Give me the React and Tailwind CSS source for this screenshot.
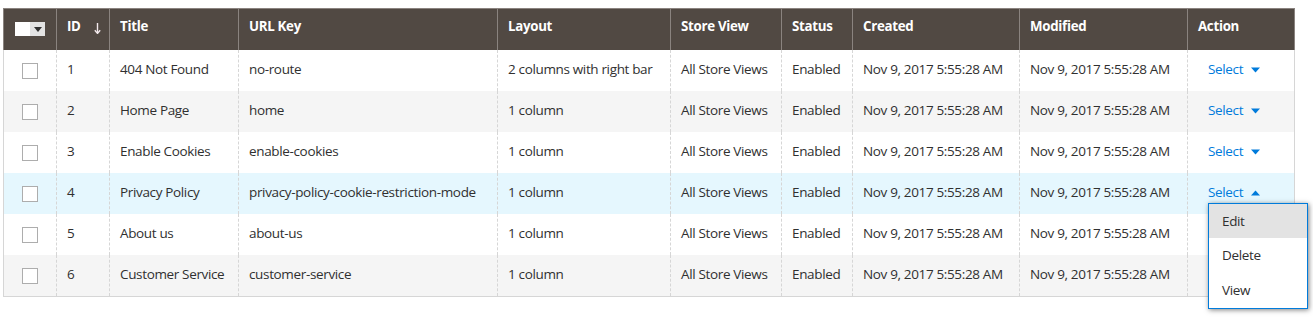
import { useState } from "react";

const rows = [
  { id: 1, title: "404 Not Found", url: "no-route", layout: "2 columns with right bar" },
  { id: 2, title: "Home Page", url: "home", layout: "1 column" },
  { id: 3, title: "Enable Cookies", url: "enable-cookies", layout: "1 column" },
  { id: 4, title: "Privacy Policy", url: "privacy-policy-cookie-restriction-mode", layout: "1 column" },
  { id: 5, title: "About us", url: "about-us", layout: "1 column" },
  { id: 6, title: "Customer Service", url: "customer-service", layout: "1 column" },
];

const cols = "grid grid-cols-[52px_53px_129px_259px_173px_111px_71px_167px_168px_107px]";

function Caret({ up }) {
  return (
    <svg width="9" height="6" viewBox="0 0 9 6" className="ml-[8px] fill-[#007bdb]">
      {up ? <path d="M0 5.5 L4.5 0.5 L9 5.5 Z" /> : <path d="M0 0.5 L9 0.5 L4.5 5.5 Z" />}
    </svg>
  );
}

export default function App() {
  const [open, setOpen] = useState(4);
  const head = ["ID", "Title", "URL Key", "Layout", "Store View", "Status", "Created", "Modified", "Action"];

  return (
    <div className="min-h-[322px] bg-white pt-[8px] pl-[3px] font-['Open_Sans',sans-serif] text-[13.5px] tracking-[-0.35px] text-[#303030]">
      <div className="w-[1292px]">
        <div className={`${cols} h-[42px] bg-[#514943] border-x border-t border-[#8a837f] text-white font-bold text-[13.3px] tracking-[-0.3px]`}>
          <div className="flex items-center justify-center pb-[1px]">
            <div className="flex h-[14px]">
              <span className="w-[15px] bg-white" />
              <span className="w-[15px] bg-[#e3e3e3] flex items-center justify-center">
                <svg width="8" height="5" viewBox="0 0 8 5"><path d="M0 0 L8 0 L4 5 Z" fill="#303030" /></svg>
              </span>
            </div>
          </div>
          {head.map((h, i) => (
            <div key={h} className="flex items-center pl-[10px] pb-[5px] border-l border-[#8a837f]">
              {h}
              {i === 0 && (
                <svg width="7" height="11" viewBox="0 0 7 11" className="ml-[13px] mt-[2px]">
                  <path d="M3.5 0 V10" stroke="#f3e9ec" strokeWidth="1.4" />
                  <path d="M0.8 7.2 L3.5 10.4 L6.2 7.2" stroke="#f3e9ec" strokeWidth="1.4" fill="none" />
                </svg>
              )}
            </div>
          ))}
        </div>
        <div className="border-x border-b border-[#d6d6d6]">
          {rows.map((r, idx) => (
            <div
              key={r.id}
              className={`${cols} h-[41px] ${r.id === 4 ? "bg-[#e5f7fe]" : idx % 2 ? "bg-[#f5f5f5]" : "bg-white"}`}
            >
              <div className="flex items-center justify-center">
                <span className="w-[16px] h-[16px] border border-[#adadad] bg-white" />
              </div>
              {[r.id, r.title, r.url, r.layout, "All Store Views", "Enabled", "Nov 9, 2017 5:55:28 AM", "Nov 9, 2017 5:55:28 AM"].map((v, i) => (
                <div key={i} className="flex items-center pl-[10px] pb-[2px] border-l border-dashed border-[#d6d6d6] whitespace-nowrap">
                  {v}
                </div>
              ))}
              <div className="relative flex items-center pl-[20px] pb-[2px] border-l border-dashed border-[#d6d6d6]">
                <button
                  onClick={() => setOpen(open === r.id ? 0 : r.id)}
                  className="flex items-center text-[#007bdb]"
                >
                  Select
                  <Caret up={open === r.id} />
                </button>
                {open === r.id && (
                  <div className="absolute z-10 left-[20px] top-[30px] w-[100px] bg-white border border-[#007bdb] shadow-[1px_1px_5px_rgba(0,0,0,0.5)]">
                    <div className="h-[34px] flex items-center pl-[13px] bg-[#e3e3e3]">Edit</div>
                    <div className="h-[35px] flex items-center pl-[13px]">Delete</div>
                    <div className="h-[35px] flex items-center pl-[13px]">View</div>
                  </div>
                )}
              </div>
            </div>
          ))}
        </div>
      </div>
    </div>
  );
}
